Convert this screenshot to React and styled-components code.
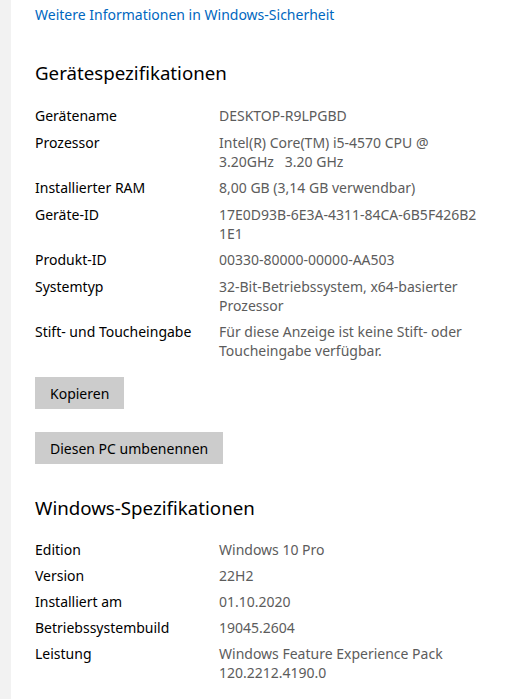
import styled, { createGlobalStyle } from 'styled-components';
import { Fragment } from 'react';

const Global = createGlobalStyle`
  html, body { margin: 0; padding: 0; background: #ffffff; }
  body { font-family: "Noto Sans", "Open Sans", sans-serif; }
`;

const Shell = styled.div`
  display: flex;
  min-height: 699px;
  width: 507px;
  overflow: hidden;
`;

const Rail = styled.div`
  width: 11px;
  flex: none;
  background: #f2f2f2;
`;

const Content = styled.main`
  flex: 1;
  padding: 5px 25px 0 24px;
  display: flex;
  flex-direction: column;
`;

const Link = styled.a`
  color: #0067c0;
  font-size: 14px;
  line-height: 20px;
  text-decoration: none;
  cursor: pointer;
`;

const Heading = styled.h2`
  margin: ${({ $top }) => $top}px 0 ${({ $bottom }) => $bottom}px;
  font-size: 18.7px;
  font-weight: 400;
  line-height: 26px;
  color: #000;
`;

const Specs = styled.dl`
  margin: 0;
  display: grid;
  grid-template-columns: 184px 1fr;
  row-gap: ${({ $gap }) => $gap}px;
  font-size: 14px;
  line-height: 19px;
`;

const Label = styled.dt`
  margin: 0;
  color: #000;
`;

const Value = styled.dd`
  margin: 0;
  color: #5c5c5c;
  word-break: ${({ $breakAll }) => ($breakAll ? 'break-all' : 'normal')};
`;

const Button = styled.button`
  align-self: flex-start;
  margin-top: ${({ $top }) => $top}px;
  height: 32px;
  padding: 0 ${({ $pad }) => $pad}px;
  border: none;
  background: #cccccc;
  color: #000;
  font-family: inherit;
  font-size: 14px;
  cursor: pointer;
`;

const device = [
  ['Gerätename', 'DESKTOP-R9LPGBD'],
  ['Prozessor', 'Intel(R) Core(TM) i5-4570 CPU @ 3.20GHz\u00a0\u00a0 3.20 GHz'],
  ['Installierter RAM', '8,00 GB (3,14 GB verwendbar)'],
  ['Geräte-ID', '17E0D93B-6E3A-4311-84CA-6B5F426B21E1', true],
  ['Produkt-ID', '00330-80000-00000-AA503'],
  ['Systemtyp', '32-Bit-Betriebssystem, x64-basierter Prozessor'],
  ['Stift- und Toucheingabe', 'Für diese Anzeige ist keine Stift- oder Toucheingabe verfügbar.'],
];

const windows = [
  ['Edition', 'Windows 10 Pro'],
  ['Version', '22H2'],
  ['Installiert am', '01.10.2020'],
  ['Betriebssystembuild', '19045.2604'],
  ['Leistung', 'Windows Feature Experience Pack 120.2212.4190.0'],
];

function SpecList({ items, gap }) {
  return (
    <Specs $gap={gap}>
      {items.map(([k, v, breakAll]) => (
        <Fragment key={k}>
          <Label>{k}</Label>
          <Value $breakAll={breakAll}>{v}</Value>
        </Fragment>
      ))}
    </Specs>
  );
}

export default function App() {
  return (
    <Shell>
      <Global />
      <Rail />
      <Content>
        <Link>Weitere Informationen in Windows-Sicherheit</Link>
        <Heading $top={35} $bottom={20}>Gerätespezifikationen</Heading>
        <SpecList items={device} gap={7.5} />
        <Button $top={17} $pad={15}>Kopieren</Button>
        <Button $top={23} $pad={15}>Diesen PC umbenennen</Button>
        <Heading $top={31} $bottom={19}>Windows-Spezifikationen</Heading>
        <SpecList items={windows} gap={7} />
      </Content>
    </Shell>
  );
}
